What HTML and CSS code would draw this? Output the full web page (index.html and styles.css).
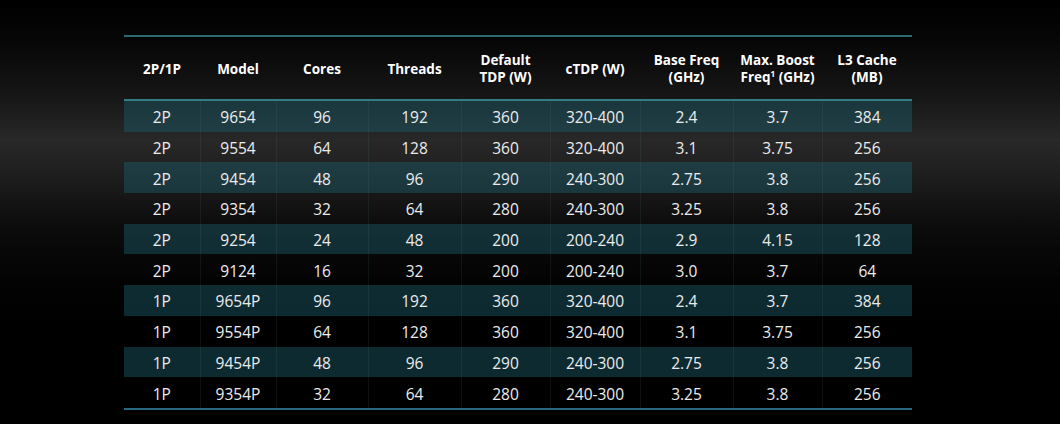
FILE: index.html
```html
<!DOCTYPE html>
<html lang="en">
<head>
<meta charset="utf-8">
<title>EPYC 9004 lineup</title>
<link rel="stylesheet" href="styles.css">
</head>
<body>
<div class="slide">
  <table class="spec">
    <colgroup>
      <col class="c1"><col class="c2"><col class="c3"><col class="c4"><col class="c5">
      <col class="c6"><col class="c7"><col class="c8"><col class="c9">
    </colgroup>
    <thead>
      <tr>
        <th>2P/1P</th>
        <th>Model</th>
        <th>Cores</th>
        <th>Threads</th>
        <th>Default<br>TDP (W)</th>
        <th>cTDP (W)</th>
        <th>Base Freq<br>(GHz)</th>
        <th>Max. Boost<br>Freq<sup>1</sup> (GHz)</th>
        <th>L3 Cache<br>(MB)</th>
      </tr>
    </thead>
    <tbody>
      <tr class="alt"><td>2P</td><td>9654</td><td>96</td><td>192</td><td>360</td><td>320-400</td><td>2.4</td><td>3.7</td><td>384</td></tr>
      <tr><td>2P</td><td>9554</td><td>64</td><td>128</td><td>360</td><td>320-400</td><td>3.1</td><td>3.75</td><td>256</td></tr>
      <tr class="alt"><td>2P</td><td>9454</td><td>48</td><td>96</td><td>290</td><td>240-300</td><td>2.75</td><td>3.8</td><td>256</td></tr>
      <tr><td>2P</td><td>9354</td><td>32</td><td>64</td><td>280</td><td>240-300</td><td>3.25</td><td>3.8</td><td>256</td></tr>
      <tr class="alt"><td>2P</td><td>9254</td><td>24</td><td>48</td><td>200</td><td>200-240</td><td>2.9</td><td>4.15</td><td>128</td></tr>
      <tr><td>2P</td><td>9124</td><td>16</td><td>32</td><td>200</td><td>200-240</td><td>3.0</td><td>3.7</td><td>64</td></tr>
      <tr class="alt"><td>1P</td><td>9654P</td><td>96</td><td>192</td><td>360</td><td>320-400</td><td>2.4</td><td>3.7</td><td>384</td></tr>
      <tr><td>1P</td><td>9554P</td><td>64</td><td>128</td><td>360</td><td>320-400</td><td>3.1</td><td>3.75</td><td>256</td></tr>
      <tr class="alt"><td>1P</td><td>9454P</td><td>48</td><td>96</td><td>290</td><td>240-300</td><td>2.75</td><td>3.8</td><td>256</td></tr>
      <tr><td>1P</td><td>9354P</td><td>32</td><td>64</td><td>280</td><td>240-300</td><td>3.25</td><td>3.8</td><td>256</td></tr>
    </tbody>
  </table>
</div>
</body>
</html>
```

FILE: styles.css
```css
html, body {
  margin: 0;
  padding: 0;
  background: #000;
}

.slide {
  width: 1060px;
  height: 424px;
  box-sizing: border-box;
  padding: 35px 0 0 124px;
  background: linear-gradient(to bottom,
    #000 0px,
    #060606 40px,
    #161616 95px,
    #282828 140px,
    #1e1e1e 175px,
    #0c0c0c 225px,
    #030303 280px,
    #000 330px);
  font-family: "Open Sans", "Noto Sans", sans-serif;
  color: #ececec;
  overflow: hidden;
}

.spec {
  border-collapse: collapse;
  table-layout: fixed;
  width: 788px;
  border-top: 2px solid #2c6a70;
  border-bottom: 2px solid #2a6882;
}

.c1, .c2 { width: 76px; }
.c3 { width: 92px; }
.c4 { width: 93px; }
.c5 { width: 89px; }
.c6 { width: 90px; }
.c7 { width: 93px; }
.c8 { width: 89px; }
.c9 { width: 90px; }

.spec th {
  height: 60px;
  padding: 2px 0 0;
  font-size: 13.5px;
  line-height: 17px;
  font-weight: 700;
  color: #fff;
  text-align: center;
  vertical-align: middle;
  border-bottom: 2px solid #347c84;
}

.spec th sup {
  font-size: 8px;
  line-height: 0;
  vertical-align: 5px;
}

.spec td {
  height: 28.7px;
  padding: 2px 0 0;
  font-size: 15.5px;
  line-height: 20px;
  text-align: center;
  vertical-align: middle;
  border-left: 1px solid rgba(90, 130, 140, 0.12);
}

.spec td:first-child {
  border-left: none;
}

.spec tr.alt td {
  background: rgba(30, 94, 108, 0.45);
}
```
